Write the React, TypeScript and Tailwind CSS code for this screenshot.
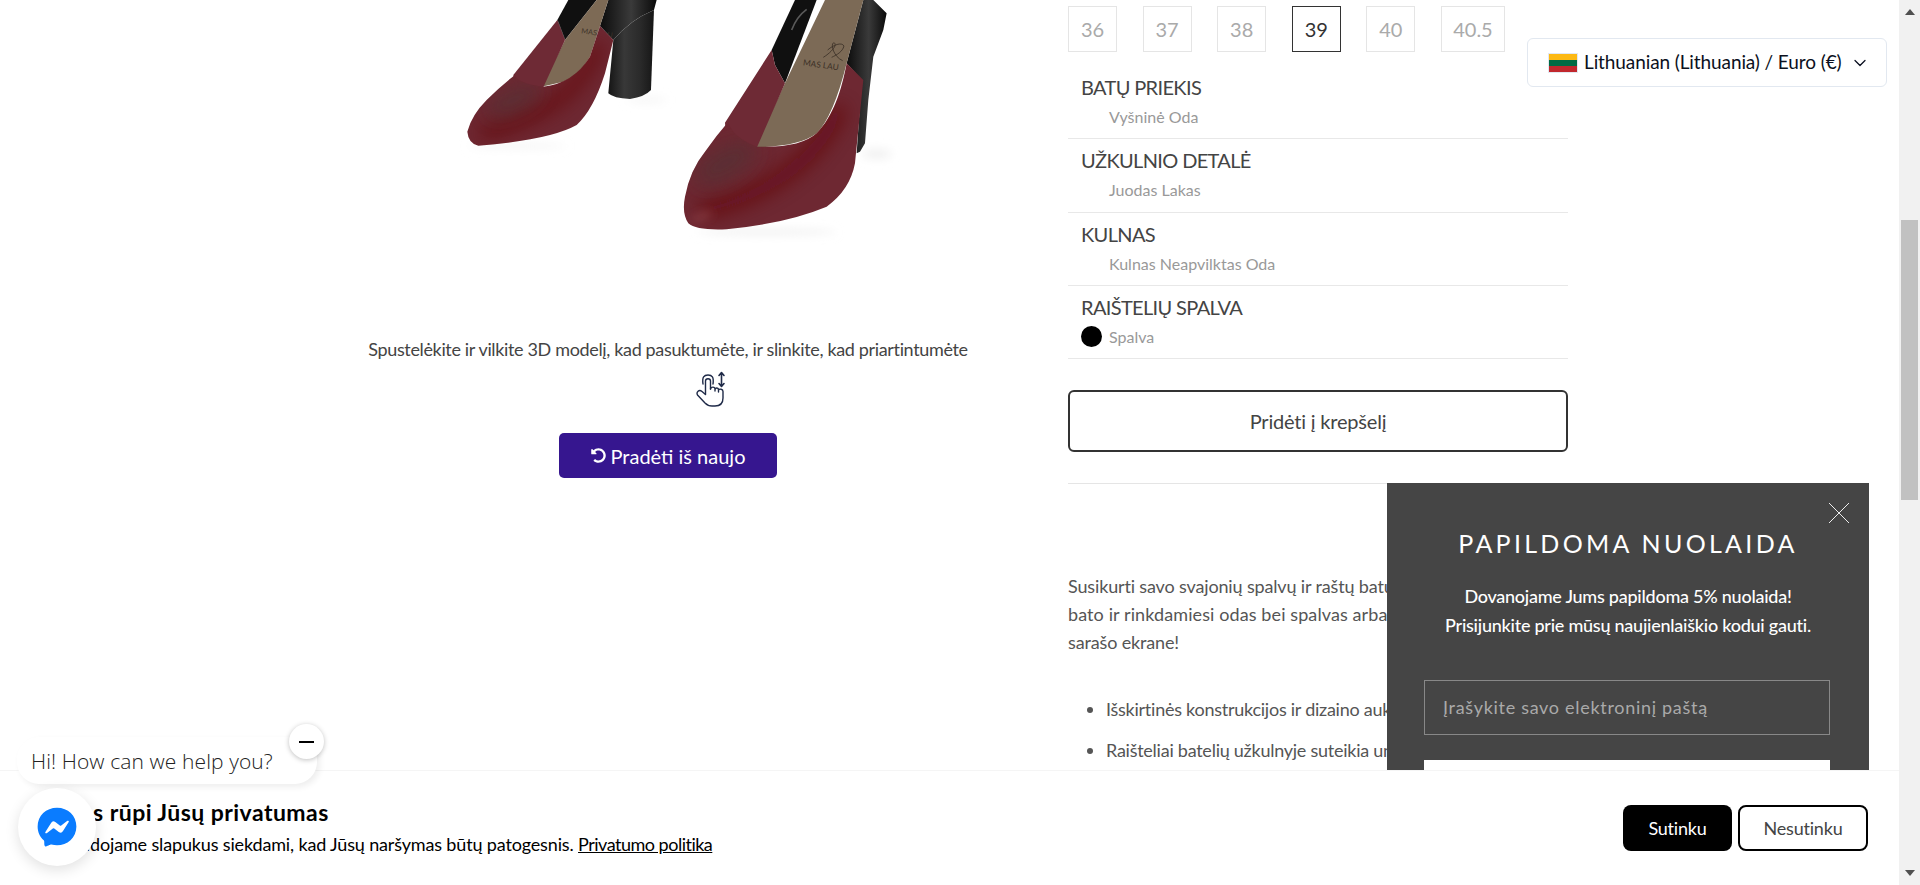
import { ChevronDown } from 'lucide-react';
import { FaFacebookMessenger, FaUndoAlt } from 'react-icons/fa';

const sizes = ['36', '37', '38', '39', '40', '40.5'];

const options = [
  { title: 'BATŲ PRIEKIS', value: 'Vyšninė Oda' },
  { title: 'UŽKULNIO DETALĖ', value: 'Juodas Lakas' },
  { title: 'KULNAS', value: 'Kulnas Neapvilktas Oda' },
  { title: 'RAIŠTELIŲ SPALVA', value: 'Spalva', swatch: true },
];

const frontBody =
  'M205 365Q215 410 290 440Q420 445 470 400C520 350 545 270 560 190L610 240L585 490Q570 570 500 620Q380 670 200 688Q110 692 85 670Q65 640 75 590Q90 510 135 455Q170 405 205 365Z';
const backBody =
  'M195 225Q200 250 280 260Q370 250 420 170L450 78L490 120L465 220Q430 330 380 375Q300 420 85 437Q55 430 52 395Q65 345 110 300Q150 260 195 225Z';

function Shoes() {
  return (
    <svg viewBox="0 0 560 280" className="ml-[132px] h-[280px] w-[560px] shrink-0 self-start">
      <defs>
        <linearGradient id="heel" x1="0" y1="0" x2="1" y2="0">
          <stop offset="0" stopColor="#151515" />
          <stop offset="0.35" stopColor="#383838" />
          <stop offset="0.7" stopColor="#2a2a2a" />
          <stop offset="1" stopColor="#161616" />
        </linearGradient>
        <linearGradient id="patent" x1="0" y1="0" x2="1" y2="0">
          <stop offset="0" stopColor="#0c0c0c" />
          <stop offset="0.55" stopColor="#3a3a3a" />
          <stop offset="1" stopColor="#0a0a0a" />
        </linearGradient>
        <filter id="soft" x="-40%" y="-300%" width="180%" height="700%">
          <feGaussianBlur stdDeviation="14" />
        </filter>
        <filter id="shade" x="-80%" y="-150%" width="260%" height="400%">
          <feGaussianBlur stdDeviation="28" />
        </filter>
        <clipPath id="frontClip">
          <path d={frontBody} />
        </clipPath>
        <clipPath id="backClip">
          <path d={backBody} />
        </clipPath>
      </defs>

      {/* back shoe, drawn in 3x units */}
      <g transform="translate(50 0) scale(0.3333)">
        <ellipse cx="200" cy="438" rx="150" ry="5" fill="#eeeeee" filter="url(#soft)" />
        <ellipse cx="590" cy="300" rx="60" ry="6" fill="#f1f1f1" filter="url(#soft)" />
        <path d="M490 120Q540 60 612 30L603 270Q585 290 540 297Q490 295 475 280Z" fill="url(#heel)" />
        <path d="M355 0L322 60L345 120L440 0Z" fill="#101010" />
        <path d="M322 60L345 120" stroke="#555" strokeWidth="3" />
        <path d="M475 0H620L612 30Q540 60 490 120L450 78Z" fill="url(#patent)" />
        <path d="M440 0H475L450 78L420 170Q390 225 340 245L275 260L345 120Z" fill="#7d6a55" />
        <text x="393" y="100" transform="rotate(8 393 100)" fontFamily="Lato, sans-serif" fontSize="22" fill="#3d3329">
          MAS LAU
        </text>
        <path d="M322 60L345 120L280 262Q190 265 190 225Z" fill="#6e2a35" />
        <path d={backBody} fill="#6e2832" />
        <g clipPath="url(#backClip)">
          <path d="M90 405Q230 365 320 305Q400 245 450 130" stroke="#64000d" strokeWidth="30" fill="none" opacity="0.85" filter="url(#shade)" />
          <ellipse cx="190" cy="300" rx="90" ry="34" transform="rotate(-25 190 300)" fill="#533036" opacity="0.7" filter="url(#shade)" />
        </g>
      </g>

      {/* front shoe, drawn in 3x units */}
      <g transform="translate(260 0) scale(0.3333)">
        <ellipse cx="320" cy="696" rx="210" ry="6" fill="#e8e8e8" filter="url(#soft)" />
        <ellipse cx="650" cy="462" rx="45" ry="14" fill="#f0f0f0" filter="url(#soft)" />
        <path d="M640 0L680 40L670 90L640 170L625 300L615 430L600 455L590 460L605 240L560 190L610 0Z" fill="url(#patent)" />
        <path d="M405 0L335 150L345 195L375 250L470 0Z" fill="#101010" />
        <path d="M440 28Q410 50 395 90" stroke="#5a5a5a" strokeWidth="5" fill="none" />
        <path d="M495 0H610L560 190Q520 350 470 400Q420 440 285 442L375 250Z" fill="#7c6a56" />
        <path d="M490 172C510 160 535 135 522 128C510 130 520 170 548 182M503 150C520 135 545 125 552 138C548 155 530 165 515 172" stroke="#3b3026" strokeWidth="2.5" fill="none" />
        <text x="428" y="196" transform="rotate(8 428 196)" fontFamily="Lato, sans-serif" fontSize="25" fill="#3b3026">
          MAS LAU
        </text>
        <path d="M335 150L345 195L375 250L290 444Q195 440 195 368Z" fill="#6e2a35" />
        <path d={frontBody} fill="#6e2832" />
        <g clipPath="url(#frontClip)">
          <path d="M120 635Q290 595 400 505Q500 425 540 320" stroke="#64000d" strokeWidth="38" fill="none" opacity="0.85" filter="url(#shade)" />
          <ellipse cx="195" cy="490" rx="105" ry="46" transform="rotate(-30 195 490)" fill="#533036" opacity="0.7" filter="url(#shade)" />
          <ellipse cx="125" cy="650" rx="35" ry="8" transform="rotate(-20 125 650)" fill="#8d4248" filter="url(#soft)" />
        </g>
      </g>
    </svg>
  );
}

function HandIcon() {
  return (
    <svg
      viewBox="16 10 30 40"
      fill="none"
      stroke="#1f2a48"
      strokeWidth="1.4"
      strokeLinecap="round"
      strokeLinejoin="round"
      className="ml-[428px] mt-[7px] h-[40px] w-[30px] self-start"
    >
      <path d="M23 24C22 17 24 15 28 15C32 15 34 17 33 24" />
      <path d="M25.5 34V21C25.5 18 30.5 18 30.5 21V29" />
      <path d="M30.5 29C31 26.5 35 26.5 35 29V31M35 29.5C35.5 27.5 38.5 27.5 38.5 30V32M38.5 30C39.5 28.5 43 29 43 31.5V38C43 43 40 46 35 46H32C29 46 27 45 25 43L17.5 35C16 32 19 29 22 31.5L25.5 34.5" />
      <path d="M41.5 13V26M39 15.5L41.5 12.5L44 15.5M39 23.5L41.5 26.5L44 23.5" strokeWidth="1.6" />
    </svg>
  );
}

function ProductColumn() {
  return (
    <div className="flex w-[800px] shrink-0 flex-col items-center">
      <Shoes />
      <p className="mt-[55px] whitespace-nowrap text-[18px] leading-[28px] tracking-[-0.35px] text-[#444]">
        Spustelėkite ir vilkite 3D modelį, kad pasuktumėte, ir slinkite, kad priartintumėte
      </p>
      <HandIcon />
      <button className="mt-[23px] flex h-[45px] w-[218px] items-center justify-center gap-[5px] rounded-[5px] bg-[#36168f] text-[20px] text-white">
        <FaUndoAlt className="h-[15px] w-[15px]" />
        Pradėti iš naujo
      </button>
    </div>
  );
}

function DetailsColumn() {
  return (
    <div className="w-[500px] shrink-0 pt-[6px] text-[#444]">
      <div className="flex gap-[25.6px]">
        {sizes.map((size) => (
          <div
            key={size}
            className={
              size === '39'
                ? 'flex h-[46px] w-[49px] items-center justify-center border border-[#333] text-[20px] text-[#333]'
                : size === '40.5'
                  ? 'flex h-[46px] w-[64px] items-center justify-center border border-[#e5e5e5] text-[20px] text-[#aaa]'
                  : 'flex h-[46px] w-[49px] items-center justify-center border border-[#e5e5e5] text-[20px] text-[#aaa]'
            }
          >
            {size}
          </div>
        ))}
      </div>

      <div className="mt-[14px]">
        {options.map((option) => (
          <div key={option.title} className="h-[73.3px] border-b border-[#e8e8e8] pl-[13px] pt-[6px]">
            <div className="text-[20px] leading-[30px] tracking-[-0.65px] text-[#444]">{option.title}</div>
            <div className="flex items-center text-[16px] leading-[30px] text-[#999]">
              {option.swatch ? (
                <span className="mr-[7px] h-[21px] w-[21px] rounded-full bg-black" />
              ) : (
                <span className="w-[28px]" />
              )}
              {option.value}
            </div>
          </div>
        ))}
      </div>

      <button className="mt-[31px] h-[62px] w-full rounded-[6px] border-2 border-[#333] text-[20px] tracking-[-0.2px] text-[#444]">
        Pridėti į krepšelį
      </button>
      <div className="mt-[31px] border-t border-[#e5e5e5]" />

      <div className="mt-[88px] whitespace-nowrap text-[18px] leading-[28px] tracking-[-0.15px] text-[#555]">
        <p>Susikurti savo svajonių spalvų ir raštų batus</p>
        <p className="tracking-[0.1px]">bato ir rinkdamiesi odas bei spalvas arba</p>
        <p>sarašo ekrane!</p>
      </div>
      <ul className="mt-[33px] list-disc whitespace-nowrap pl-[38px] text-[18px] leading-[41px] tracking-[-0.25px] text-[#555]">
        <li>Išskirtinės konstrukcijos ir dizaino aukšto</li>
        <li>Raišteliai batelių užkulnyje suteikia unikalų</li>
      </ul>
    </div>
  );
}

function LanguagePicker() {
  return (
    <div className="absolute left-[1527px] top-[38px] flex h-[49px] w-[360px] items-center rounded-[6px] border border-[#e2e8f0] bg-white pl-[20px] text-[19px] tracking-[-0.1px] text-[#0b1020]">
      <span className="mr-[6px] flex h-[20px] w-[30px] flex-col border border-[#e2e8f0]">
        <span className="flex-1 bg-[#fdb913]" />
        <span className="flex-1 bg-[#006a44]" />
        <span className="flex-1 bg-[#c1272d]" />
      </span>
      Lithuanian (Lithuania) / Euro (€)
      <ChevronDown className="ml-[8px] h-[20px] w-[20px]" strokeWidth={1.5} />
    </div>
  );
}

function NewsletterPopup() {
  return (
    <div className="absolute left-[1387px] top-[483px] h-[330px] w-[482px] bg-[#454545] text-center text-white">
      <svg viewBox="0 0 22 22" className="absolute right-[20px] top-[20px] h-[20px] w-[20px]" stroke="#fff" strokeWidth="1">
        <path d="M0 0L22 22M22 0L0 22" />
      </svg>
      <h2 className="mt-[43px] text-[25px] leading-[34px] tracking-[3.3px]">PAPILDOMA NUOLAIDA</h2>
      <p className="mt-[22px] text-[18px] font-medium leading-[29px] tracking-[-0.25px]">
        Dovanojame Jums papildoma 5% nuolaida!
        <br />
        Prisijunkite prie mūsų naujienlaiškio kodui gauti.
      </p>
      <div className="mx-[37px] mr-[39px] mt-[40px] flex h-[55px] items-center border border-[#888] pl-[18px] text-[18px] tracking-[0.7px] text-[#aaa]">
        Įrašykite savo elektroninį paštą
      </div>
      <div className="mx-[37px] mr-[39px] mt-[25px] h-[44px] bg-white" />
    </div>
  );
}

function CookieBar() {
  return (
    <div className="absolute inset-x-0 bottom-0 flex h-[115px] items-center justify-between border-t border-[#f5f5f5] bg-white pl-[37px] pr-[31px]">
      <div className="text-black">
        <h3 className="ml-[1px] text-[23px] font-bold leading-[30px] tracking-[0.45px]">Mums rūpi Jūsų privatumas</h3>
        <p className="ml-[21px] mt-[2px] text-[18px] leading-[30px] tracking-[-0.15px]">
          Naudojame slapukus siekdami, kad Jūsų naršymas būtų patogesnis.{' '}
          <a className="tracking-[-0.5px] underline">Privatumo politika</a>
        </p>
      </div>
      <div className="flex gap-[6px] text-[18px] tracking-[-0.2px]">
        <button className="h-[46px] w-[109px] rounded-[8px] bg-black text-white">Sutinku</button>
        <button className="h-[46px] w-[130px] rounded-[8px] border-2 border-black text-[#444]">Nesutinku</button>
      </div>
    </div>
  );
}

function ChatWidget() {
  return (
    <>
      <div className="absolute left-[17px] top-[737px] flex h-[47px] w-[300px] items-center rounded-[22px] bg-white pl-[14px] pt-[2px] font-['Open_Sans'] text-[21px] font-light tracking-[0.1px] text-[#222] shadow-[3px_3px_6px_rgba(0,0,0,0.07)]">
        Hi! How can we help you?
      </div>
      <div className="absolute left-[289px] top-[724px] flex h-[35px] w-[35px] items-center justify-center rounded-full bg-white shadow-[0_1px_5px_rgba(0,0,0,0.25)]">
        <span className="h-[2px] w-[15px] bg-black" />
      </div>
      <div className="absolute left-[18px] top-[788px] flex h-[78px] w-[78px] items-center justify-center rounded-full bg-white shadow-[0_4px_14px_rgba(0,0,0,0.12)]">
        <FaFacebookMessenger className="h-[40px] w-[40px] text-[#0a7cff]" />
      </div>
    </>
  );
}

function Scrollbar() {
  return (
    <div className="flex w-[21px] shrink-0 flex-col items-center bg-[#f1f1f1]">
      <svg viewBox="0 0 10 6" className="mt-[9px] h-[6px] w-[10px]" fill="#505050">
        <path d="M5 0L10 6H0Z" />
      </svg>
      <div className="mt-[205px] h-[280px] w-[17px] bg-[#c1c1c1]" />
      <svg viewBox="0 0 10 6" className="mt-auto mb-[9px] h-[6px] w-[10px]" fill="#505050">
        <path d="M0 0H10L5 6Z" />
      </svg>
    </div>
  );
}

export default function App() {
  return (
    <div className="flex h-[885px] w-[1920px] overflow-hidden bg-white font-['Lato',sans-serif]">
      <div className="relative flex-1 overflow-hidden">
        <div className="flex pl-[268px]">
          <ProductColumn />
          <DetailsColumn />
        </div>
        <LanguagePicker />
        <NewsletterPopup />
        <CookieBar />
        <ChatWidget />
      </div>
      <Scrollbar />
    </div>
  );
}
